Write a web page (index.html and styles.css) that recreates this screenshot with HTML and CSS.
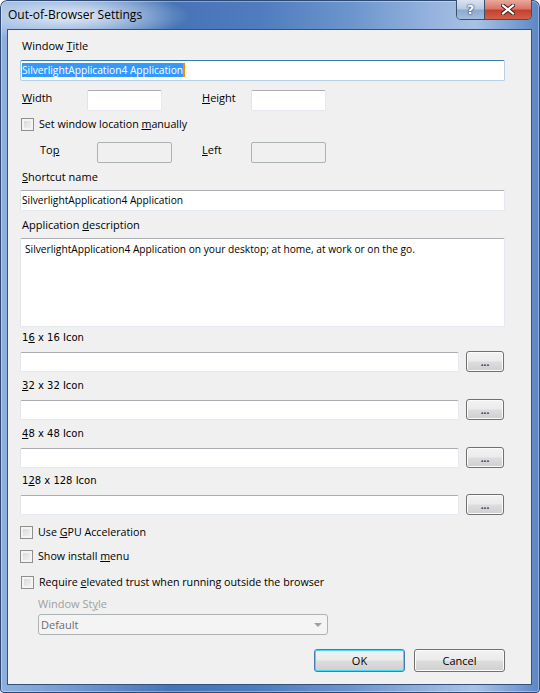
FILE: index.html
```html
<!DOCTYPE html>
<html lang="en">
<head>
    <meta charset="UTF-8">
    <title>Out-of-Browser Settings</title>
    <link rel="stylesheet" href="styles.css">
</head>
<body>
    <div class="window">
        <!-- Title bar -->
        <div class="titlebar">
            <span class="caption">Out-of-Browser Settings</span>
            <div class="caption-buttons">
                <span class="cap-btn help">?</span>
                <span class="cap-btn close">
                    <svg width="14" height="11" viewBox="0 0 14 11">
                        <path d="M2 1.5 L12 9.5 M12 1.5 L2 9.5" stroke="#3a1a14" stroke-width="4" stroke-linecap="square"/>
                        <path d="M2 1.5 L12 9.5 M12 1.5 L2 9.5" stroke="#ffffff" stroke-width="2.2" stroke-linecap="square"/>
                    </svg>
                </span>
            </div>
        </div>

        <div class="client">
            <div class="label first">Window <u>T</u>itle</div>
            <div class="textbox focused title-box"><span class="selected">SilverlightApplication4 Application</span></div>

            <div class="size-row">
                <span class="label"><u>W</u>idth</span>
                <div class="textbox"></div>
                <span class="label"><u>H</u>eight</span>
                <div class="textbox"></div>
            </div>

            <label class="check-row location-row">
                <span class="checkbox"></span>
                <span>Set window location <u>m</u>anually</span>
            </label>

            <div class="pos-row">
                <span class="label">To<u>p</u></span>
                <div class="textbox disabled"></div>
                <span class="label"><u>L</u>eft</span>
                <div class="textbox disabled"></div>
            </div>

            <div class="label gap6"><u>S</u>hortcut name</div>
            <div class="textbox gap6">SilverlightApplication4 Application</div>

            <div class="label gap6">Application <u>d</u>escription</div>
            <div class="textbox textarea gap6">SilverlightApplication4 Application on your desktop; at home, at work or on the go.</div>

            <div class="label icon-label gap3">1<u>6</u> x 16 Icon</div>
            <div class="icon-row">
                <div class="textbox"></div>
                <button class="btn browse">...</button>
            </div>

            <div class="label icon-label gap6"><u>3</u>2 x 32 Icon</div>
            <div class="icon-row">
                <div class="textbox"></div>
                <button class="btn browse">...</button>
            </div>

            <div class="label icon-label gap6"><u>4</u>8 x 48 Icon</div>
            <div class="icon-row">
                <div class="textbox"></div>
                <button class="btn browse">...</button>
            </div>

            <div class="label icon-label gap5">1<u>2</u>8 x 128 Icon</div>
            <div class="icon-row">
                <div class="textbox"></div>
                <button class="btn browse">...</button>
            </div>

            <label class="check-row gpu-row">
                <span class="checkbox"></span>
                <span>Use <u>G</u>PU Acceleration</span>
            </label>
            <label class="check-row install-row">
                <span class="checkbox"></span>
                <span>Show install <u>m</u>enu</span>
            </label>
            <label class="check-row trust-row">
                <span class="checkbox"></span>
                <span>Require <u>e</u>levated trust when running outside the browser</span>
            </label>

            <div class="label greyed style-label">Window St<u>y</u>le</div>
            <div class="combo">
                <span>Default</span>
                <span class="arrow"></span>
            </div>

            <div class="dialog-buttons">
                <button class="btn default">OK</button>
                <button class="btn">Cancel</button>
            </div>
        </div>
    </div>
</body>
</html>
```

FILE: styles.css
```css
/* Whole page is just the dialog window */
body {
    margin: 0;
    background-color: #ffffff;
    font-family: "Open Sans", "Noto Sans", sans-serif;
    font-size: 11px;
    color: #000000;
}

u {
    text-decoration: underline;
    text-underline-offset: 1px;
}

/* Aero style frame */
.window {
    width: 540px;
    height: 693px;
    box-sizing: border-box;
    display: flex;
    flex-direction: column;
    padding: 0 8px 8px 7px;
    border-radius: 7px 7px 4px 4px;
    box-shadow: inset 0 0 0 1px #2f4a72, inset 0 0 0 2px rgba(255, 255, 255, 0.35);
    background:
        radial-gradient(ellipse 120px 26px at 70px 16px, rgba(235, 242, 250, 0.95), rgba(235, 242, 250, 0) 100%),
        linear-gradient(to right, #8fb0dc 0%, #7aa0d4 10%, #4674b7 32%, #4e7cbd 48%, #6c95cd 65%, #95b3de 80%, #a8c2e4 88%, #6f97cf 97%, #5a85c4 100%);
}

.titlebar {
    height: 29px;
    display: flex;
    justify-content: space-between;
    align-items: flex-start;
}

.caption {
    margin-top: 7px;
    margin-left: 1px;
    font-size: 12px;
    line-height: 16px;
    color: #000000;
}

.caption-buttons {
    display: flex;
    margin-right: 0;
    border: 1px solid #3b4f6e;
    border-top: none;
    border-radius: 0 0 5px 5px;
    overflow: hidden;
}

.cap-btn {
    height: 19px;
    display: flex;
    align-items: center;
    justify-content: center;
}

.help {
    width: 27px;
    border-right: 1px solid #3b4f6e;
    background: linear-gradient(#d9e3f0 0%, #b9cbe2 45%, #8ea9cf 55%, #a3bddf 100%);
    font-family: "DejaVu Sans", sans-serif;
    font-weight: bold;
    font-size: 13px;
    color: #ffffff;
    text-shadow: 0 0 2px #1d2c45, 0 0 1px #1d2c45;
}

.close {
    width: 46px;
    background: linear-gradient(#e9a99c 0%, #d9766a 45%, #c4412f 55%, #d0604a 100%);
}

/* Client area */
.client {
    flex: 1;
    background-color: #f0f0f0;
    border: 1px solid #34507c;
    padding: 8px 26px 0 12px;
    display: flex;
    flex-direction: column;
}

.label {
    line-height: 15px;
    padding-left: 2px;
    white-space: nowrap;
}

.gap3 { margin-top: 3px; }
.gap5 { margin-top: 5px; }
.gap6 { margin-top: 6px; }

.icon-label {
    font-family: "DejaVu Sans", sans-serif;
    font-size: 10px;
}

.greyed {
    color: #a0a0a0;
}

.textbox {
    height: 21px;
    box-sizing: border-box;
    background-color: #ffffff;
    border: 1px solid #abadb3;
    border-color: #abadb3 #e3e9ef #e3e9ef #e2e3ea;
    border-radius: 2px;
    padding: 2px 1px;
    font-size: 10.2px;
    line-height: 15px;
    white-space: nowrap;
    overflow: hidden;
}

.textbox.disabled {
    background-color: #f0f0f0;
    border-color: #adb2b5;
}

.title-box {
    margin-top: 7px;
}

.textbox.focused {
    border-color: #3d7bad #b5cfe7 #b5cfe7 #a4c9e3;
}

.selected {
    background-color: #3399ff;
    color: #ffffff;
    border-right: 2px solid #ff8a00;
}

.textarea {
    height: 89px;
    padding: 3px 4px;
    white-space: normal;
}

/* Width / Height and Top / Left rows */
.size-row,
.pos-row {
    display: grid;
    align-items: start;
}

.size-row {
    margin-top: 9px;
    grid-template-columns: 67px 75px 38px 51px 75px;
}

.size-row .textbox:nth-of-type(2) {
    grid-column: 5;
}

.size-row .label:nth-of-type(2) {
    grid-column: 4;
}

.pos-row {
    margin-top: 10px;
    padding-left: 20px;
    grid-template-columns: 57px 75px 28px 51px 75px;
}

.pos-row .label:nth-of-type(2) {
    grid-column: 4;
}

.pos-row .textbox:nth-of-type(2) {
    grid-column: 5;
}

.pos-row .label:first-child {
    padding-left: 0;
}

/* Checkboxes */
.check-row {
    display: flex;
    align-items: center;
    gap: 5px;
    height: 15px;
    line-height: 15px;
    padding-left: 1px;
    font-size: 10.7px;
}

.location-row { margin-top: 6px; }
.gpu-row { margin-top: 10px; padding-left: 0; }
.install-row { margin-top: 9px; padding-left: 0; }
.trust-row { margin-top: 11px; padding-left: 1px; }

.checkbox {
    width: 13px;
    height: 13px;
    box-sizing: border-box;
    border: 1px solid #8e8f8f;
    background: linear-gradient(135deg, #d2d4d8 0%, #e8e9ec 60%, #f4f4f4 100%);
    box-shadow: inset 0 0 0 2px #f4f4f4;
    flex-shrink: 0;
}

/* Icon path rows */
.icon-row {
    margin-top: 6px;
    display: flex;
    align-items: flex-start;
    gap: 7px;
}

.icon-row .textbox {
    width: 439px;
    height: 20px;
    margin-top: 1px;
}

/* Buttons */
.btn {
    height: 21px;
    box-sizing: border-box;
    border: 1px solid #707070;
    border-radius: 3px;
    background: linear-gradient(#f2f2f2 0%, #ebebeb 48%, #dddddd 52%, #cfcfcf 100%);
    box-shadow: inset 0 0 0 1px #fbfbfb;
    font-family: "Open Sans", "Noto Sans", sans-serif;
    font-size: 11px;
    color: #000000;
    padding: 0;
}

.browse {
    width: 38px;
    line-height: 12px;
    font-weight: bold;
    font-size: 10px;
    color: #3a2a4a;
}

.dialog-buttons {
    margin-top: 14px;
    display: flex;
    justify-content: flex-end;
    gap: 9px;
}

.dialog-buttons .btn {
    width: 91px;
    height: 23px;
}

.btn.default {
    border-color: #3c7fb1;
    box-shadow: inset 0 0 0 1px #48d8fb;
}

/* Disabled combo box */
.style-label {
    margin-top: 6px;
    padding-left: 18px;
}

.combo {
    margin-top: 3px;
    margin-left: 18px;
    width: 290px;
    height: 21px;
    box-sizing: border-box;
    border: 1px solid #adb2b5;
    border-radius: 3px;
    background-color: #f4f4f4;
    color: #6d6d6d;
    display: flex;
    align-items: center;
    justify-content: space-between;
    padding: 0 5px 0 2px;
}

.arrow {
    width: 0;
    height: 0;
    border-left: 4px solid transparent;
    border-right: 4px solid transparent;
    border-top: 4px solid #a0a0a0;
}
```
